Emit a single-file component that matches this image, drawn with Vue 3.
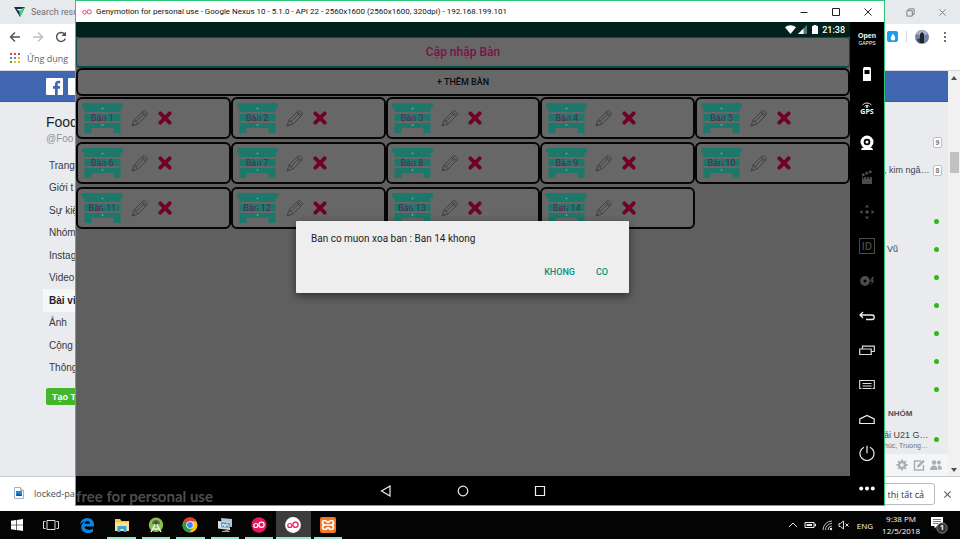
<script setup>
const tables = Array.from({ length: 14 }, (_, i) => (i === 13 ? 'Ban 14' : `Bàn ${i + 1}`))

const sideLinks = ['Trang', 'Giới t', 'Sự kiệ', 'Nhóm', 'Instag', 'Video', 'Bài vi', 'Ảnh', 'Cộng', 'Thông']

const contacts = [
  { name: '', badge: '9' },
  { name: ', kim ngâ…', badge: '8' },
  { name: '' },
  { name: 'Vũ' },
  { name: '' },
  { name: '' },
  { name: '' },
  { name: '' },
  { name: '' }
]

const gridColors = ['#ea4335', '#ea4335', '#ea4335', '#34a853', '#4285f4', '#fbbc05', '#34a853', '#fbbc05', '#fbbc05']
</script>

<template>
  <div class="desktop">
    <div class="stage">
      <section class="browser">
        <header class="tabs">
          <div class="tab">
            <svg class="tab-logo" viewBox="0 0 12 12"><path d="M0 1h11L6 11z" fill="#14304f" /><path d="M5 4l6-3-5 10z" fill="#3fd07c" /><path d="M3 3h5l-1 1.500H4z" fill="#e7eaed" /></svg>
            <span>Search resu</span>
          </div>
          <div class="win-buttons">
            <button aria-label="Restore"><svg viewBox="0 0 10 10"><path d="M3 3V1h6v6H7M1 3h6v6H1z" fill="none" stroke="#777" /></svg></button>
            <button aria-label="Close"><svg viewBox="0 0 10 10"><path d="M1.500 1.500l7 7M8.500 1.500l-7 7" fill="none" stroke="#777" /></svg></button>
          </div>
        </header>
        <div class="toolbar">
          <div class="nav-buttons">
            <button aria-label="Back"><svg viewBox="0 0 12 12"><path d="M11 6H1.500M6 1.500L1.500 6 6 10.500" fill="none" stroke="#4d5156" stroke-width="1.400" /></svg></button>
            <button aria-label="Forward"><svg viewBox="0 0 12 12"><path d="M1 6h9.500M6 1.500L10.500 6 6 10.500" fill="none" stroke="#b9bcc0" stroke-width="1.400" /></svg></button>
            <button aria-label="Reload"><svg viewBox="0 0 12 12"><path d="M10.300 7.500A4.500 4.500 0 1 1 9.500 3" fill="none" stroke="#4d5156" stroke-width="1.400" /><path d="M11 .5v4.500H6.500z" fill="#4d5156" /></svg></button>
          </div>
          <div class="tools">
            <button class="drop" aria-label="Extension"><svg viewBox="0 0 10 10"><path d="M5 1.500C6 3.500 7.300 4.500 7.300 6.200a2.300 2.300 0 0 1-4.600 0C2.700 4.500 4 3.500 5 1.500z" fill="#fff" /></svg></button>
            <i class="divider"></i>
            <button aria-label="Profile"><svg class="avatar" viewBox="0 0 14 14"><circle cx="7" cy="7" r="7" fill="#7285a3" /><path d="M1 4a7 7 0 0 1 12 0L9 5 7 3 5 5z" fill="#a9b5c8" /><path d="M5 4l2-2 2 2v9H5z" fill="#20242f" /><path d="M1.500 9.500L5 8v5.500z" fill="#35405a" /></svg></button>
            <button aria-label="Menu"><svg viewBox="0 0 12 12"><g fill="#4d5156"><circle cx="6" cy="2" r="1.100" /><circle cx="6" cy="6" r="1.100" /><circle cx="6" cy="10" r="1.100" /></g></svg></button>
          </div>
        </div>
        <div class="bookmarks">
          <svg class="apps-grid" viewBox="0 0 10 10"><rect v-for="(c, i) in gridColors" :key="i" :x="(i % 3) * 4" :y="Math.floor(i / 3) * 4" width="2" height="2" :fill="c" /></svg>
          <span>Ứng dụng</span>
        </div>
        <div class="page">
          <div class="page-main">
            <div class="fb-bar">
              <svg class="fb-logo" viewBox="0 0 17 17"><rect width="17" height="17" rx="1" fill="#fff" /><path d="M9 17v-6.300H7V8h2V6.300C9 4 10.300 2.800 12.400 2.800c.9 0 1.600.1 1.800.1v2.400H13c-1.100 0-1.300.5-1.300 1.200V8h2.500l-.4 2.700h-2.100V17z" fill="#4267b2" /></svg>
              <i class="fb-search"></i>
            </div>
            <div class="fb-body">
              <aside class="fb-left">
                <h1>Food</h1>
                <p class="handle">@Foo</p>
                <nav class="side-nav">
                  <a v-for="l in sideLinks" :key="l" href="#" :class="{ active: l === 'Bài vi' }">{{ l }}</a>
                </nav>
                <button class="create">Tạo T</button>
              </aside>
              <aside class="fb-right">
                <ul class="contacts">
                  <li v-for="(c, i) in contacts" :key="i">
                    <span>{{ c.name }}</span>
                    <b v-if="c.badge" class="badge">{{ c.badge }}</b>
                    <i v-else class="online"></i>
                  </li>
                </ul>
                <h2>NHÓM</h2>
                <div class="group">
                  <p>ải U21 G…<small>húc, Truong…</small></p>
                  <i class="online"></i>
                </div>
                <div class="chat-tools">
                  <button aria-label="Options"><svg viewBox="0 0 12 12"><g stroke="#a9adb5" stroke-width="2"><path d="M6 .5v11M.5 6h11M2.100 2.100l7.800 7.800M9.900 2.100l-7.800 7.800" /></g><circle cx="6" cy="6" r="4" fill="#a9adb5" /><circle cx="6" cy="6" r="1.800" fill="#f4f5f7" /></svg></button>
                  <button aria-label="New message"><svg viewBox="0 0 12 12"><path d="M8 2H1.500v9h9V6" fill="none" stroke="#a9adb5" stroke-width="1.400" /><path d="M4 8.500l.5-2.200L10 .8 11.700 2.500 6.200 8z" fill="#a9adb5" /></svg></button>
                  <button aria-label="New group"><svg viewBox="0 0 12 12"><g fill="#a9adb5"><circle cx="4" cy="3.500" r="2.200" /><circle cx="9" cy="3.500" r="1.900" /><path d="M0 11c0-3 1.500-4.500 4-4.500S7.500 8 7.500 11zM8 10.500h4C12 8 11 6.500 8 6.500z" /></g></svg></button>
                </div>
              </aside>
            </div>
          </div>
          <div class="scrollbar">
            <svg viewBox="0 0 6 4"><path d="M0 4l3-4 3 4z" fill="#505050" /></svg>
            <i class="thumb"></i>
            <svg viewBox="0 0 6 4"><path d="M0 0l3 4 3-4z" fill="#505050" /></svg>
          </div>
        </div>
        <footer class="downloads">
          <div class="file">
            <svg viewBox="0 0 10 12"><path d="M.5.500h6l3 3v8h-9z" fill="#fff" stroke="#9bb4cc" /><path d="M6.500.500v3h3" fill="#d7e3ee" stroke="#9bb4cc" /><rect x="2" y="4" width="6" height="5" fill="#2488d8" /><path d="M2 9l2-3 2 2 1-1 1 2z" fill="#124d92" /></svg>
            <span>locked-pa</span>
          </div>
          <div class="dl-right">
            <button class="show-all">n thị tất cả</button>
            <button class="dl-close" aria-label="Close downloads"><svg viewBox="0 0 10 10"><path d="M1.500 1.500l7 7M8.500 1.500l-7 7" fill="none" stroke="#5f6368" stroke-width="1.300" /></svg></button>
          </div>
        </footer>
      </section>

      <section class="emulator">
        <header class="titlebar">
          <svg class="oo" viewBox="0 0 10 6"><g fill="none" stroke="#ec407a"><circle cx="2.500" cy="3.300" r="1.800" /><circle cx="7.200" cy="2.800" r="2.100" /></g></svg>
          <h2>Genymotion for personal use - Google Nexus 10 - 5.1.0 - API 22 - 2560x1600 (2560x1600, 320dpi) - 192.168.199.101</h2>
          <div class="win-buttons dark">
            <button aria-label="Minimize"><svg viewBox="0 0 10 10"><path d="M1.500 5.500h7" stroke="#222" /></svg></button>
            <button aria-label="Maximize"><svg viewBox="0 0 10 10"><path d="M1.500 1.500h7v7h-7z" fill="none" stroke="#222" /></svg></button>
            <button aria-label="Close"><svg viewBox="0 0 10 10"><path d="M1.500 1.500l7 7M8.500 1.500l-7 7" stroke="#222" /></svg></button>
          </div>
        </header>
        <div class="emu-body">
          <main class="device">
            <div class="status">
              <svg class="wifi" viewBox="0 0 11 9"><path d="M0 2.200a8.500 8.500 0 0 1 11 0L5.500 9z" fill="#fff" /></svg>
              <svg class="signal" viewBox="0 0 9 9"><path d="M9 0v9H0z" fill="#5d7673" /><path d="M5.500 3.500V9H0z" fill="#fff" /></svg>
              <svg class="battery" viewBox="0 0 6 9"><path d="M0 1h1.500V0h3v1H6v8H0z" fill="#fff" /></svg>
              <time>21:38</time>
            </div>
            <div class="screen">
              <h3 class="heading">Cập nhập Bàn</h3>
              <button class="add">+ THÊM BÀN</button>
              <div class="cards">
                <article v-for="t in tables" :key="t" class="card">
                  <div class="cabinet">
                    <svg viewBox="0 0 41 30"><g fill="#1b786b"><rect width="41" height="5" rx="2" /><path d="M2.500 4h36v5h-36zM2.500 11h36v7h-36zM2.500 20h36v4h-36zM2.500 23h7v7h-7zM31.500 23h7v7h-7zM8 24h25v1H8z" /></g><g fill="#789b94"><circle cx="20.500" cy="5.500" r="1" /><circle cx="20.500" cy="14" r="1" /><circle cx="20.500" cy="22" r="1" /></g></svg>
                    <span>{{ t }}</span>
                  </div>
                  <button :aria-label="'Edit ' + t"><svg class="pencil" viewBox="0 0 18 18"><g fill="none" stroke="#3d3d3d" stroke-width=".9"><path d="M1 17l2-6L12 2c1.500-1.500 5.500 2 4 4l-9 9z" /><path d="M3 11c1.500 0 1.500 1.300 1.500 2 1.200 0 2 .7 2.500 2M4.500 13l8.200-8.200M10.500 3.500l4 4M11.500 2.500l4 4M1.800 14.500l1.700 1.600" /></g></svg></button>
                  <button :aria-label="'Delete ' + t"><svg class="cross" viewBox="0 0 12 12"><path d="M2 2l8 8M10 2l-8 8" stroke="#710028" stroke-width="3.200" stroke-linecap="round" /></svg></button>
                </article>
              </div>
            </div>
            <div class="android-nav">
              <button aria-label="Back"><svg viewBox="0 0 12 12"><path d="M10 1v10L1.500 6z" fill="none" stroke="#eee" stroke-width="1.200" /></svg></button>
              <button aria-label="Home"><svg viewBox="0 0 12 12"><circle cx="6" cy="6" r="4.800" fill="none" stroke="#eee" stroke-width="1.200" /></svg></button>
              <button aria-label="Recents"><svg viewBox="0 0 12 12"><path d="M1.500 1.500h9v9h-9z" fill="none" stroke="#eee" stroke-width="1.200" /></svg></button>
            </div>
            <p class="watermark">free for personal use</p>
            <div class="dialog" role="dialog" aria-labelledby="question">
              <p id="question">Ban co muon xoa ban : Ban 14 khong</p>
              <div class="actions">
                <button>KHONG</button>
                <button>CO</button>
              </div>
            </div>
          </main>
          <aside class="rail">
            <button class="gapps"><b>Open</b><small>GAPPS</small></button>
            <button aria-label="Battery"><svg viewBox="0 0 16 16"><path d="M4 2.500l1-1.500h6l1 1.500V15H4z" fill="#fff" /><path d="M5.500 4h5v4h-5z" fill="#000" /></svg></button>
            <button class="gps"><svg viewBox="0 0 12 6"><g fill="none" stroke="#ddd"><path d="M1.500 3a6 6 0 0 1 9 0M3.500 4.500a3.300 3.300 0 0 1 5 0" /></g><circle cx="6" cy="5" r="1" fill="#fff" /></svg><b>GPS</b></button>
            <button aria-label="Camera"><svg viewBox="0 0 16 16"><path d="M2 15c0-2 2-3 6-3s6 1 6 3z" fill="#fff" /><circle cx="8" cy="7" r="6.500" fill="#fff" /><circle cx="8" cy="7" r="3.300" fill="#000" /><circle cx="8" cy="7" r="1.500" fill="#fff" /></svg></button>
            <button aria-label="Record"><svg viewBox="0 0 16 16"><g fill="#4b4b47"><path d="M3 8h10v7H3zM2.500 5l2.500-1 1 2.500-2.500 1zM6 3.500l2.500-1 1 2.500-2.500 1zM9.500 2.200L12 1l1 2.500-2.500 1z" /></g><path d="M5 8l-1 2M8 8l-1 2M11 8l-1 2" stroke="#000" /></svg></button>
            <button aria-label="Move"><svg viewBox="0 0 16 16"><g fill="#4b4b47"><path d="M8 .5l2 3H6zM8 15.500l2-3H6zM.5 8l3-2v4zM15.500 8l-3-2v4z" /><circle cx="8" cy="8" r="1.800" /></g></svg></button>
            <button class="id-btn">ID</button>
            <button aria-label="Disk"><svg viewBox="0 0 16 16"><circle cx="6" cy="8" r="3.200" fill="none" stroke="#4b4b47" stroke-width="3.400" /><path d="M13 4l-2 4.500h2L12 12l3.500-4.500h-2L15 4z" fill="#4b4b47" /></svg></button>
            <button aria-label="Back"><svg viewBox="0 0 16 16"><path d="M4 4L1 7l3 3M1 7h12a2.200 2.200 0 0 1 0 4.500H7" fill="none" stroke="#eee" stroke-width="1.300" /></svg></button>
            <button aria-label="Recent apps"><svg viewBox="0 0 16 16"><path d="M.7 7h11.500v5.500H.7zM3.500 6.500V4.200h11.800v5.300h-2.500" fill="none" stroke="#ddd" stroke-width="1.200" /></svg></button>
            <button aria-label="Menu"><svg viewBox="0 0 16 16"><path d="M2.500 12.500H.7v-8h14.600v8h-1.800M3.500 7.500h9M3.500 10h9M3.500 12.500h9" fill="none" stroke="#ddd" stroke-width="1.100" /></svg></button>
            <button aria-label="Home"><svg viewBox="0 0 16 16"><path d="M.8 12.500V8L8 4.500 15.200 8v4.500z" fill="none" stroke="#eee" stroke-width="1.200" /></svg></button>
            <button aria-label="Power"><svg viewBox="0 0 16 16"><path d="M5 2.200a7 7 0 1 0 6 0M8 .8v7.500" fill="none" stroke="#eee" stroke-width="1.200" /></svg></button>
            <button aria-label="More"><svg viewBox="0 0 16 16"><g fill="#fff"><circle cx="2.200" cy="8.500" r="2" /><circle cx="8" cy="8.500" r="2" /><circle cx="13.800" cy="8.500" r="2" /></g></svg></button>
          </aside>
        </div>
      </section>
    </div>

    <footer class="taskbar">
      <button class="sys" aria-label="Start"><svg viewBox="0 0 12 12"><path d="M0 1.800l5-.8v4.700H0zM5.600.9L12 0v5.700H5.600zM0 6.300h5V11l-5-.8zM5.600 6.300H12V12l-6.400-.9z" fill="#fff" /></svg></button>
      <button class="sys" aria-label="Task view"><svg class="wide" viewBox="0 0 16 12"><path d="M4 1.500h8v9H4zM2.500 2.500h-2v7h2M13.500 2.500h2v7h-2" fill="none" stroke="#ddd" /></svg></button>
      <nav class="apps">
        <button aria-label="Edge"><svg viewBox="0 0 16 16"><path d="M1 7.500C1.500 3.500 4.500 1 8.300 1 12.500 1 15 4 15 7.700V9.500H5.500c.2 2.200 2 3.300 4.300 3.300 1.600 0 3-.4 4.200-1.100v3c-1.200.8-3 1.300-5 1.300-4 0-6.800-2.300-6.800-6C2.200 7.500 3.500 5.500 5.800 4.500 3.800 4.700 2 5.800 1 7.500zM5.600 6.800h5.200C10.800 5 9.800 4 8.300 4 6.900 4 5.900 5 5.600 6.800z" fill="#0b84e0" /></svg></button>
        <button class="open" aria-label="Files"><svg viewBox="0 0 16 16"><path d="M1 2h5l1.500 2H15v10H1z" fill="#f3c64a" /><path d="M1 5.500h14V14H1z" fill="#fbe291" /><path d="M3.500 15V9h9v6h-3v-3h-3v3z" fill="#35a4dc" /></svg></button>
        <button class="open" aria-label="Android Studio"><svg viewBox="0 0 16 16"><circle cx="8" cy="7.800" r="7.200" fill="#8bbf4e" /><path d="M4 7a4 4 0 0 1 8 0z" fill="#5d6a58" /><path d="M8 6L3 15M8 6l5 9M4.500 11c2 1.500 5 1.500 7 0" fill="none" stroke="#eef3e8" stroke-width="1.500" /><circle cx="8" cy="6" r="1.700" fill="#455045" /></svg></button>
        <button class="open" aria-label="Chrome"><svg viewBox="0 0 16 16"><circle cx="8" cy="8" r="7.500" fill="#fbc116" /><path d="M8 8L1.500 4.200A7.500 7.500 0 0 1 14.500 4.200H8z" fill="#e33b2e" /><path d="M8 8L1.500 4.200A7.500 7.500 0 0 0 7.500 15.500L11 10z" fill="#279b4b" /><circle cx="8" cy="8" r="3.700" fill="#fff" /><circle cx="8" cy="8" r="2.900" fill="#4285f4" /></svg></button>
        <button class="open" aria-label="Monitor"><svg viewBox="0 0 16 16"><path d="M4 1l11 1v8l-10-1z" fill="#b9c4cc" /><path d="M1 4l12 1v8L1 11.500z" fill="#d9dee2" /><path d="M4 5l9 1v5l-9-.8z" fill="#6aa1be" /><path d="M5 9l1.500-2L8 9.500 9.500 7l2.500 2.500" fill="none" stroke="#fff" /><path d="M5 14l6-1 2 2H5z" fill="#9aa4ab" /></svg></button>
        <button class="open" aria-label="Genymotion"><svg viewBox="0 0 16 16"><circle cx="8" cy="8" r="7.700" fill="#e5185d" /><g fill="none" stroke="#fff" stroke-width="1.200"><circle cx="4.800" cy="8.500" r="2" /><circle cx="10.500" cy="7.700" r="2.600" /></g></svg></button>
        <button class="open current" aria-label="Genymotion Player"><svg viewBox="0 0 16 16"><circle cx="8" cy="8" r="7.900" fill="#fff" /><g fill="none" stroke="#e5185d" stroke-width="1.200"><circle cx="4.800" cy="8.500" r="2" /><circle cx="10.500" cy="7.700" r="2.600" /></g></svg></button>
        <button class="open" aria-label="XAMPP"><svg viewBox="0 0 16 16"><rect width="16" height="16" rx="2" fill="#f37623" /><path d="M5.500 8C3 8 2.500 6.800 2.500 5.700 2.500 4.300 3.500 3.500 4.800 3.500 7 3.500 7 5.500 8 5.500s1-2 3.200-2c1.300 0 2.300.8 2.300 2.200 0 1.100-.5 2.300-3 2.300 2.500 0 3 1.200 3 2.300 0 1.400-1 2.200-2.300 2.200-2.200 0-2.200-2-3.200-2s-1 2-3.200 2c-1.300 0-2.300-.8-2.300-2.200C2.500 9.200 3 8 5.500 8zM5.500 8h5" fill="none" stroke="#fff" stroke-width="1.700" /></svg></button>
      </nav>
      <div class="tray">
        <svg viewBox="0 0 12 12"><path d="M2 8l4-4 4 4" fill="none" stroke="#ddd" /></svg>
        <svg viewBox="0 0 12 12"><path d="M1 3.500h9v5H1zM10.500 5h1v2h-1" fill="none" stroke="#eee" /><path d="M2.500 5H8v2H2.500z" fill="#eee" /></svg>
        <svg viewBox="0 0 12 12"><g fill="none" stroke="#bbb"><path d="M2 11A9 9 0 0 1 11 2M4.500 11A6.500 6.500 0 0 1 11 4.500M7 11a4 4 0 0 1 4-4" /></g><circle cx="10" cy="10" r="1.200" fill="#eee" /></svg>
        <svg viewBox="0 0 12 12"><path d="M1 4.500h1.500L5.500 2v8L2.500 7.500H1zM7.500 4.500l3 3M10.500 4.500l-3 3" fill="none" stroke="#ddd" /></svg>
        <span class="lang">ENG</span>
        <time class="clock"><span>9:38 PM</span><span>12/5/2018</span></time>
        <button class="note" aria-label="Notifications"><svg viewBox="0 0 18 18"><path d="M1 1h12v9H7l-2.500 2.500V10H1z" fill="#fff" /><path d="M3 3.500h8M3 5.500h8M3 7.500h5" stroke="#555" stroke-width=".8" /><circle cx="12" cy="12" r="5.200" fill="#333" stroke="#999" stroke-width=".8" /></svg><b>1</b></button>
      </div>
    </footer>
  </div>
</template>

<style>
body { margin: 0; overflow: hidden; }
</style>

<style scoped>
* { box-sizing: border-box; }
h1, h2, h3, p, ul { margin: 0; padding: 0; font-weight: 400; }
ul { list-style: none; }
a { color: inherit; text-decoration: none; }
button { margin: 0; padding: 0; border: 0; background: none; color: inherit; font: inherit; display: flex; align-items: center; justify-content: center; }
svg { display: block; flex: none; }

.desktop { display: flex; flex-direction: column; height: 100vh; overflow: hidden; font-family: "Open Sans", "Liberation Sans", sans-serif; font-size: 9px; }
.stage { flex: 1; min-height: 0; position: relative; }

.browser { height: 100%; display: flex; flex-direction: column; background: #fff; }
.tabs { height: 24px; display: flex; justify-content: space-between; background: #e7eaed; color: #6d7074; padding: 0 2px 0 14px; }
.tab { display: flex; align-items: center; gap: 5px; font-family: Roboto, sans-serif; }
.tab-logo { width: 12px; height: 12px; }
.win-buttons { display: flex; align-items: center; }
.win-buttons button { width: 32px; height: 20px; }
.win-buttons svg { width: 9px; height: 9px; }
.toolbar { height: 25px; display: flex; justify-content: space-between; align-items: center; padding: 0 9px; }
.nav-buttons { display: flex; gap: 11px; }
.nav-buttons svg { width: 12px; height: 12px; }
.tools { display: flex; align-items: center; gap: 8px; }
.drop { width: 11px; height: 11px; border-radius: 2px; background: #1c9cf0; }
.drop svg { width: 10px; height: 10px; }
.divider { width: 1px; height: 11px; background: #d4d6d9; }
.avatar { width: 14px; height: 14px; }
.tools button:last-child svg { width: 12px; height: 12px; margin-left: 2px; }
.bookmarks { height: 22px; display: flex; align-items: center; gap: 7px; padding: 0 10px 3px; border-bottom: 1px solid #d5d7da; color: #5f6368; }
.apps-grid { width: 10px; height: 10px; }

.page { flex: 1; min-height: 0; display: flex; background: #e9ebee; font-family: "Liberation Sans", Arial, sans-serif; }
.page-main { flex: 1; display: flex; flex-direction: column; }
.fb-bar { height: 31px; background: #4267b2; border-bottom: 1px solid #38579e; display: flex; align-items: center; gap: 5px; padding-left: 46px; }
.fb-logo { width: 17px; height: 17px; }
.fb-search { width: 40px; height: 17px; background: #fff; border-radius: 1px; }
.fb-body { flex: 1; min-height: 0; display: flex; justify-content: space-between; }
.fb-left { width: 80px; padding-top: 11px; color: #35383d; font-size: 10px; white-space: nowrap; }
.fb-left h1 { padding-left: 46px; font-size: 14px; line-height: 18px; color: #1d2129; }
.handle { padding-left: 46px; line-height: 16px; color: #90949c; }
.side-nav { display: flex; flex-direction: column; height: 225px; margin-top: 7px; padding-left: 43px; }
.side-nav a { flex: 1; display: flex; align-items: center; padding-left: 6px; }
.side-nav .active { background: #f6f7f9; font-weight: 700; color: #1d2129; }
.create { width: 34px; height: 17px; margin: 9px 0 0 46px; border-radius: 2px; background: #42b72a; color: #fff; font-size: 9px; font-weight: 700; justify-content: flex-start; padding-left: 6px; }

.fb-right { width: 64px; display: flex; flex-direction: column; padding-top: 26px; color: #3f444c; font-size: 9px; white-space: nowrap; }
.contacts li { height: 28px; display: flex; align-items: center; justify-content: space-between; padding: 0 6px 0 3px; }
.contacts li:nth-child(2) { padding-left: 0; }
.contacts li:nth-child(3) { margin-top: 23px; }
.badge { width: 9px; height: 11px; border: 1px solid #bcc0c6; border-radius: 2px; background: #fff; color: #777; font-size: 7px; line-height: 9px; text-align: center; }
.online { width: 5px; height: 5px; border-radius: 50%; background: #35b51c; flex: none; margin-right: 3px; }
.fb-right h2 { padding-left: 4px; margin-top: 5px; font-size: 8px; line-height: 12px; font-weight: 700; color: #4b4f56; }
.group { display: flex; align-items: center; justify-content: space-between; padding: 9px 6px 0 0; }
.group p { line-height: 12px; }
.group small { display: block; font-size: 7px; line-height: 9px; color: #70747b; }
.chat-tools { margin-top: auto; height: 22px; display: flex; align-items: center; justify-content: flex-end; gap: 5px; padding-right: 6px; background: #f4f5f7; flex: none; }
.chat-tools svg { width: 12px; height: 12px; }
.scrollbar { width: 12px; background: #f1f1f1; display: flex; flex-direction: column; align-items: center; padding: 5px 0 4px; }
.scrollbar svg { width: 6px; height: 4px; }
.thumb { width: 9px; height: 21px; margin: 72px 0 auto; background: #c1c1c1; }

.downloads { height: 35px; display: flex; justify-content: space-between; align-items: center; padding: 0 8px 0 14px; border-top: 1px solid #c9cbce; color: #4a4d51; background: #fff; }
.file { display: flex; align-items: center; gap: 10px; padding-bottom: 2px; }
.file svg { width: 10px; height: 12px; }
.dl-right { display: flex; align-items: center; gap: 8px; }
.show-all { height: 22px; padding: 0 10px; width: 80px; justify-content: flex-end; border: 1px solid #b8bbbf; border-radius: 3px; white-space: nowrap; color: #2f3236; }
.dl-close svg { width: 9px; height: 9px; }

.emulator { position: absolute; left: 75px; right: 75px; top: 0; bottom: 5px; display: flex; flex-direction: column; border: 1px solid #2fc679; background: #000; }
.titlebar { height: 21px; display: flex; align-items: center; background: #fff; color: #111; padding-left: 6px; }
.oo { width: 10px; height: 6px; }
.titlebar h2 { flex: 1; margin-left: 4px; font-family: Roboto, sans-serif; font-size: 8px; white-space: nowrap; }
.win-buttons.dark svg { width: 10px; height: 10px; }
.emu-body { flex: 1; min-height: 0; display: flex; }
.device { flex: 1; min-width: 0; position: relative; display: flex; flex-direction: column; font-family: Roboto, sans-serif; }
.status { height: 15px; display: flex; align-items: center; justify-content: flex-end; gap: 2px; padding-right: 5px; background: #00211c; color: #fff; }
.wifi { width: 11px; height: 9px; }
.signal { width: 9px; height: 9px; margin-right: 3px; }
.battery { width: 6px; height: 9px; }
.status time { font-size: 9px; font-weight: 500; margin-left: 2px; }
.screen { flex: 1; min-height: 0; background: #5f5f5f; display: flex; flex-direction: column; }
.heading { height: 31px; display: flex; align-items: center; justify-content: center; background: #676767; border: 1px solid #0a4d45; border-bottom-width: 2px; border-radius: 4px; color: #7c1149; font-size: 12px; font-weight: 500; }
.add { height: 28px; background: #676767; border: 2px solid #050505; border-radius: 6px; color: #0a0a0a; font-size: 9px; font-weight: 500; }
.cards { display: grid; grid-template-columns: repeat(5, 1fr); gap: 3px 0; margin-top: 1px; }
.card { height: 42px; display: flex; align-items: center; background: #676767; border: 2px solid #050505; border-radius: 6px; padding-left: 4px; }
.cabinet { display: grid; place-items: center; margin-right: 8px; }
.cabinet > * { grid-area: 1 / 1; }
.cabinet svg { width: 41px; height: 30px; }
.cabinet span { font-size: 9px; line-height: 12px; color: #64204c; }
.pencil { width: 18px; height: 18px; margin-right: 9px; }
.cross { width: 14px; height: 14px; }
.android-nav { height: 29px; display: flex; align-items: center; justify-content: center; gap: 65px; background: #000; }
.android-nav svg { width: 12px; height: 12px; }
.watermark { position: absolute; left: 0; bottom: 0; font-family: Lato, sans-serif; font-size: 15px; line-height: 17px; font-weight: 700; color: #4d4d4d; }
.dialog { position: absolute; top: 199px; left: 220px; right: 221px; height: 72px; padding: 10px 11px 10px 15px; display: flex; flex-direction: column; justify-content: space-between; background: #eee; border-radius: 1px; box-shadow: 0 3px 8px rgba(0, 0, 0, .5); color: #212121; font-size: 10px; }
.dialog p { line-height: 16px; }
.actions { display: flex; justify-content: flex-end; gap: 1px; color: #009485; font-size: 9px; font-weight: 500; }
.actions button { height: 22px; padding: 0 10px; }

.rail { width: 34px; display: flex; flex-direction: column; background: #000; color: #fff; }
.rail button { flex: 1; flex-direction: column; }
.rail svg { width: 16px; height: 16px; }
.gapps { font-family: "Liberation Sans", sans-serif; }
.gapps b { font-size: 7px; line-height: 8px; }
.gapps small { font-size: 5px; line-height: 6px; }
.rail .gps svg { width: 12px; height: 6px; }
.gps b { font-size: 7px; line-height: 7px; }
.rail .id-btn { flex: none; width: 16px; height: 16px; margin: 9px auto 10px; border: 1px solid #4b4b47; color: #4b4b47; font-size: 10px; line-height: 12px; font-weight: 600; }

.taskbar { height: 28px; display: flex; background: #040404; color: #fff; }
.sys { width: 34px; }
.sys svg { width: 12px; height: 12px; }
.sys .wide { width: 16px; }
.apps { display: flex; width: 275px; margin-left: 2px; }
.apps button { flex: 1; position: relative; }
.apps svg { width: 16px; height: 16px; }
.open::after { content: ""; position: absolute; left: 3px; right: 3px; bottom: 0; height: 2px; background: #9fe5c8; }
.current { background: #3c3c3c; }
.current::after { left: 0; right: 0; }
.tray { margin-left: auto; display: flex; align-items: center; gap: 5px; padding-right: 12px; font-size: 8px; }
.tray > svg { width: 12px; height: 12px; }
.lang { margin-left: 2px; }
.clock { display: flex; flex-direction: column; align-items: center; line-height: 12px; margin: 0 5px 0 4px; }
.note { position: relative; }
.note svg { width: 18px; height: 18px; }
.note b { position: absolute; right: 4px; bottom: 1px; font-size: 7px; line-height: 10px; }
</style>
